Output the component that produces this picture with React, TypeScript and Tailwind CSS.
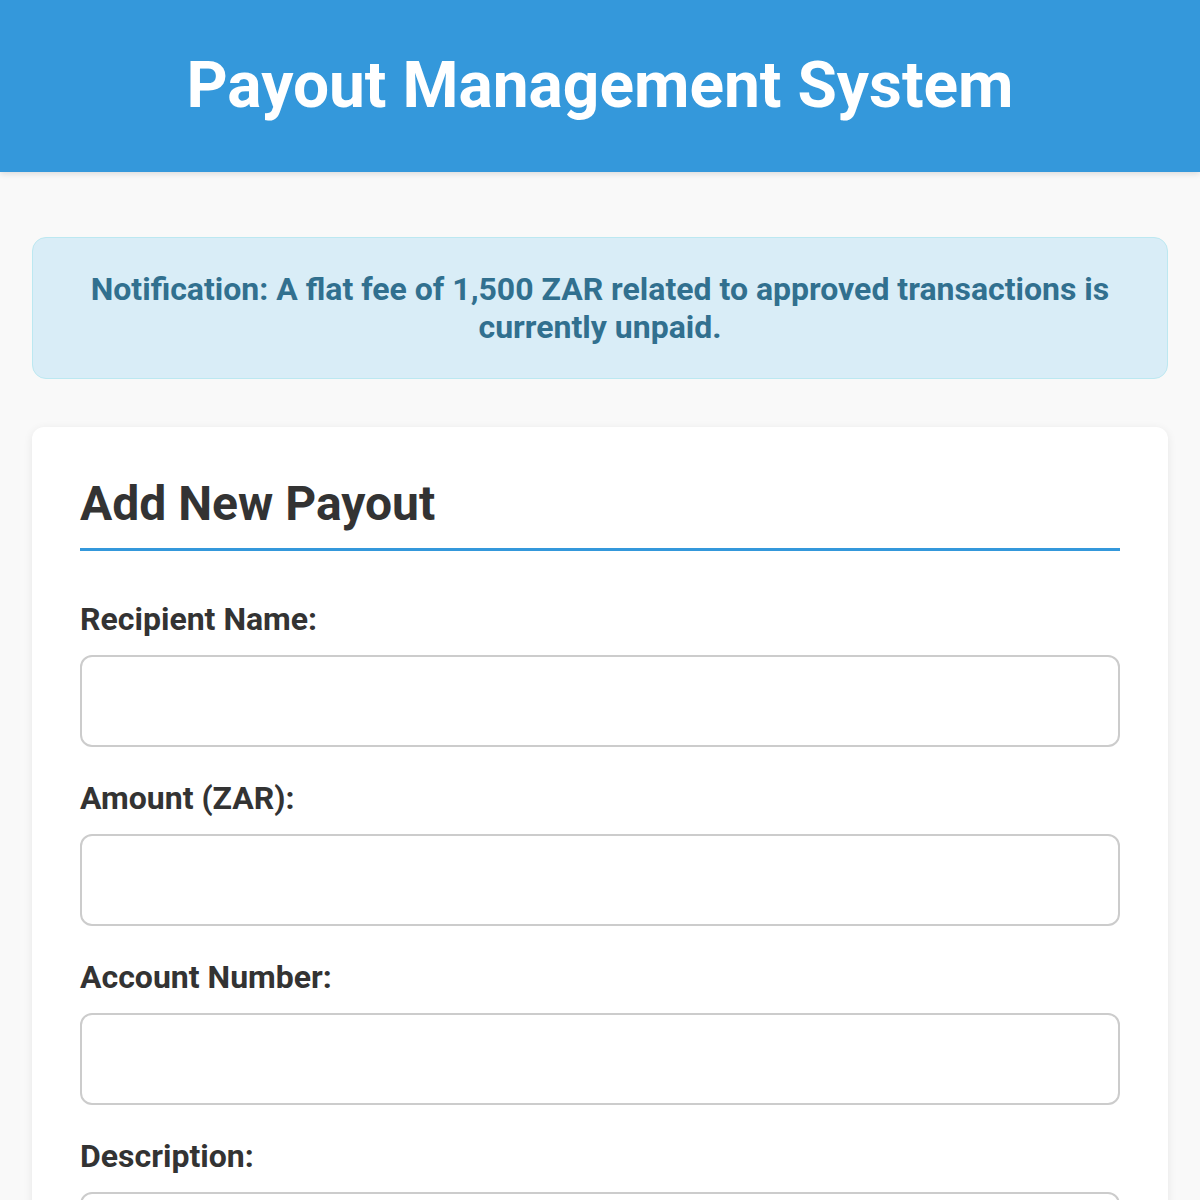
import React from "react";

const fields = ["Recipient Name:", "Amount (ZAR):", "Account Number:", "Description:"];

export default function App() {
  return (
    <div className="min-h-screen bg-[#f9f9f9] font-['Roboto',sans-serif] text-[#333]">
      <header className="bg-[#3498db] py-[48px] text-center shadow-[0_2px_6px_rgba(0,0,0,0.12)]">
        <h1 className="text-[64px] font-bold leading-[76px] text-white">Payout Management System</h1>
      </header>

      <main className="px-[32px] pt-[65px]">
        <div className="rounded-[14px] border border-[#bce8f1] bg-[#d9edf7] px-[32px] py-[32px] text-center text-[32px] font-bold leading-[38px] text-[#31708f]">
          Notification: A flat fee of 1,500 ZAR related to approved transactions is currently unpaid.
        </div>

        <div className="mt-[48px] rounded-[12px] bg-white p-[48px] shadow-[0_2px_10px_rgba(0,0,0,0.08)]">
          <h2 className="mb-[50px] border-b-[3px] border-[#3498db] pb-[15px] text-[48px] font-bold leading-[1.2]">
            Add New Payout
          </h2>
          {fields.map((f) => (
            <div key={f} className="mb-[33px]">
              <label className="mb-[18px] block text-[32px] font-bold leading-[36px]">{f}</label>
              <input
                type="text"
                className="block h-[92px] w-full rounded-[12px] border-2 border-[#ccc] bg-white px-[20px] text-[32px] outline-none"
              />
            </div>
          ))}
        </div>
      </main>
    </div>
  );
}
